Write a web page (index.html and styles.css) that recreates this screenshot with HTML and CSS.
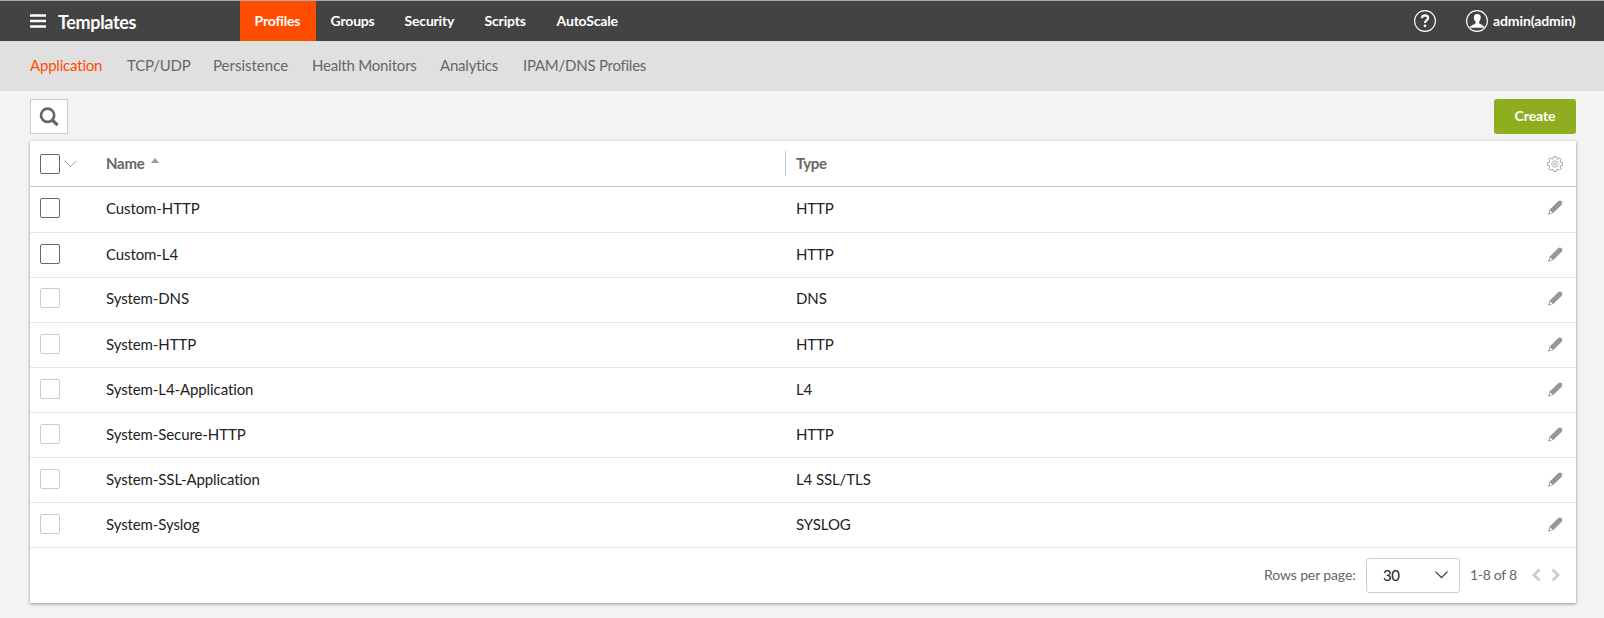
FILE: index.html
```html
<!DOCTYPE html>
<html lang="en">
<head>
<meta charset="utf-8">
<title>Templates - Profiles</title>
<link rel="stylesheet" href="styles.css">
</head>
<body>
<svg class="sprite" aria-hidden="true">
  <symbol id="pencil" viewBox="0 0 15 15"><path d="M1.700 9.600 9.900 1.500Q11.800-.3 13.500 1.200 15.100 3 13.500 4.900L5.300 13 .3 14.400Z" fill="#979797"/><path d="M2.300 10.400 4.600 12.700 1.500 13.500Z" fill="#fff"/><path d="M.3 14.400 2.400 13.800.9 12.400Z" fill="#979797"/></symbol>
</svg>
<header class="topbar">
  <div class="brand">
    <svg width="16" height="14" viewBox="0 0 16 14"><path d="M0 1.500H16M0 7H16M0 12.500H16" stroke="#fff" stroke-width="2.300"/></svg>
    <span class="brand-name">Templates</span>
  </div>
  <nav class="tabs">
    <a class="tab active"><span class="t1">Profiles</span></a>
    <a class="tab"><span class="t2">Groups</span></a>
    <a class="tab"><span class="t3">Security</span></a>
    <a class="tab"><span class="t4">Scripts</span></a>
    <a class="tab"><span class="t5">AutoScale</span></a>
  </nav>
  <div class="account">
    <svg class="help" width="22" height="22" viewBox="0 0 22 22"><circle cx="11" cy="11" r="10.400" fill="none" stroke="#fff" stroke-width="1.100"/><path d="M7.900 8.100Q8.100 5.500 11 5.400 14.100 5.400 14.100 8 14.100 9.400 12.500 10.400 11.100 11.300 11.100 13" fill="none" stroke="#fff" stroke-width="2.200"/><circle cx="11" cy="15.800" r="1.400" fill="#fff"/></svg>
    <svg width="22" height="22" viewBox="0 0 22 22"><circle cx="11" cy="11" r="10.400" fill="none" stroke="#fff" stroke-width="1.100"/><path d="M11.300 4C13.800 4 14.900 5.300 14.700 7.600 14.600 9.700 13.800 10.600 13.200 11.500V13.200C13.500 14.200 17.500 14.800 18.900 17.800H3.500C5 14.900 9.300 14.200 9.600 13.200V11.500C8.700 10.600 7.900 9.600 7.900 7.400 7.900 5.200 9.200 4 11.300 4Z" fill="#fff"/></svg>
    <span class="user">admin(admin)</span>
  </div>
</header>
<nav class="subnav">
  <a class="s1 current">Application</a><a class="s2">TCP/UDP</a><a class="s3">Persistence</a><a class="s4">Health Monitors</a><a class="s5">Analytics</a><a class="s6">IPAM/DNS Profiles</a>
</nav>
<main>
  <div class="toolbar">
    <button class="search"><svg width="20" height="20" viewBox="0 0 20 20"><circle cx="8.600" cy="8.300" r="6.600" fill="none" stroke="#666" stroke-width="2.700"/><path d="M13.200 13 18.600 18.200" stroke="#666" stroke-width="3.200"/></svg></button>
    <button class="create">Create</button>
  </div>
  <section class="card">
    <div class="row head">
      <div class="check"><i class="box"></i><svg width="13" height="8" viewBox="0 0 13 8"><path d="M.5.7 6.500 6.700 12.500.7" fill="none" stroke="#999"/></svg></div>
      <div class="name">Name<i class="sort"></i></div>
      <div class="type"><span>Type</span></div>
      <svg class="gear" width="16" height="16" viewBox="0 0 16 16" fill="none" stroke="#a3a3a3"><path d="M6.500.8h3l.4 1.900 1.100.4 1.600-1.200 1.600 1.600-1.100 1.700.5 1.100 1.900.4v2.800l-1.900.4-.5 1.100 1.100 1.700-1.600 1.600-1.600-1.200-1.100.5-.4 1.800h-3l-.4-1.800-1.100-.5-1.700 1.200-1.600-1.600 1.200-1.700-.5-1.100-1.900-.4V6.700l1.900-.4.5-1.100-1.200-1.700 1.600-1.600 1.700 1.200 1.100-.4Z"/><circle cx="8" cy="8" r="3.300" stroke="#bbb"/><circle cx="8" cy="8" r="1.400" stroke="#bbb"/></svg>
    </div>
    <div class="row first raised"><div class="check"><i class="box"></i></div><div class="name">Custom-HTTP</div><div class="type">HTTP</div><svg class="edit"><use href="#pencil"/></svg></div>
    <div class="row"><div class="check"><i class="box"></i></div><div class="name">Custom-L4</div><div class="type">HTTP</div><svg class="edit"><use href="#pencil"/></svg></div>
    <div class="row locked raised"><div class="check"><i class="box"></i></div><div class="name">System-DNS</div><div class="type">DNS</div><svg class="edit"><use href="#pencil"/></svg></div>
    <div class="row locked"><div class="check"><i class="box"></i></div><div class="name">System-HTTP</div><div class="type">HTTP</div><svg class="edit"><use href="#pencil"/></svg></div>
    <div class="row locked"><div class="check"><i class="box"></i></div><div class="name">System-L4-Application</div><div class="type">L4</div><svg class="edit"><use href="#pencil"/></svg></div>
    <div class="row locked"><div class="check"><i class="box"></i></div><div class="name">System-Secure-HTTP</div><div class="type">HTTP</div><svg class="edit"><use href="#pencil"/></svg></div>
    <div class="row locked"><div class="check"><i class="box"></i></div><div class="name">System-SSL-Application</div><div class="type">L4 SSL/TLS</div><svg class="edit"><use href="#pencil"/></svg></div>
    <div class="row locked"><div class="check"><i class="box"></i></div><div class="name">System-Syslog</div><div class="type">SYSLOG</div><svg class="edit"><use href="#pencil"/></svg></div>
    <footer class="pager">
      <span class="per-page">Rows per page:</span>
      <div class="select"><span>30</span><svg width="13" height="8" viewBox="0 0 13 8"><path d="M.5.7 6.500 6.700 12.500.7" fill="none" stroke="#333" stroke-width="1.200"/></svg></div>
      <span class="range">1-8 of 8</span>
      <svg class="arrows" width="28" height="14" viewBox="0 0 28 14"><path d="M7.500 1.500 2 7 7.500 12.500M20.500 1.500 26 7 20.500 12.500" fill="none" stroke="#ccc" stroke-width="2.800"/></svg>
    </footer>
  </section>
</main>
</body>
</html>
```
FILE: styles.css
```css
* { box-sizing: border-box; }
body { margin: 0; height: 618px; background: #f3f3f3; color: #222; font: 15px/20px Lato, "Liberation Sans", sans-serif; font-variant-ligatures: none; letter-spacing: -.1px; overflow: hidden; }
.sprite { display: none; }
svg { display: block; flex: none; }
button { border: 0; padding: 0; font: inherit; letter-spacing: inherit; }
.topbar { display: flex; height: 41px; border-top: 1px solid #a9abaa; background: #434343; color: #fff; font-size: 14px; font-weight: 700; letter-spacing: -.2px; }
.brand { width: 240px; padding-left: 30px; display: flex; align-items: center; gap: 12px; }
.brand-name { font-size: 18px; letter-spacing: -.35px; padding-top: 2px; }
.tabs { display: flex; }
.tab { padding: 0 15px; display: flex; align-items: center; white-space: nowrap; }
.tab.active { background: #ff4d00; }
.t1 { width: 46px; }
.t2 { width: 44px; }
.t3 { width: 50px; }
.t4 { width: 42px; }
.t5 { width: 62px; }
.t1, .t2, .t3, .t4, .t5 { margin-left: -.4px; margin-right: .4px; }
.account { margin-left: auto; padding-right: 28px; display: flex; align-items: center; }
.help { margin-right: 30px; }
.user { margin-left: 5px; width: 83px; white-space: nowrap; letter-spacing: -.1px; }
.subnav { display: flex; align-items: center; gap: 23px; height: 50px; padding: 0 30px 2px; background: #e0e0e0; color: #666; white-space: nowrap; letter-spacing: -.2px; }
.current { color: #ff4d00; }
.s1 { width: 74px; }
.s2 { width: 63px; }
.s3 { width: 76px; letter-spacing: 0; }
.s4 { width: 105px; }
.s5 { width: 60px; }
.s6 { width: 125px; letter-spacing: -.25px; }
main { padding: 8px 28px 0 30px; }
.toolbar { display: flex; justify-content: space-between; height: 42px; align-items: flex-start; }
.search { width: 38px; height: 35px; border: 1px solid #ccc; background: #fff; display: flex; align-items: center; justify-content: center; }
.create { width: 82px; height: 35px; padding-bottom: 2px; border-radius: 3px; background: #8fae1f; color: #fff; font-size: 14px; font-weight: 700; }
.card { background: #fff; box-shadow: 0 1px 3px rgba(0,0,0,.4); }
.row { display: flex; height: 45px; align-items: center; padding-bottom: 2px; border-bottom: 1px solid #e6e6e6; }
.row.raised { padding-bottom: 4px; }
.row.first { height: 46px; }
.row.head { height: 46px; padding: 0; border-color: #c8c8c8; color: #666; font-weight: 700; }
.check { width: 76px; padding-left: 10px; display: flex; align-items: center; gap: 4px; }
.box { width: 20px; height: 20px; border: 1px solid #666; border-radius: 2px; background: #fff; }
.locked .box { border-color: #ccc; }
.name { width: 679px; display: flex; }
.head .name { padding-bottom: 2px; letter-spacing: -.25px; }
.sort { margin: 5px 0 0 6px; width: 0; height: 0; border: 4.5px solid transparent; border-top: 0; border-bottom: 5px solid #999; }
.type { flex: 1; padding-left: 11px; }
.head .type { border-left: 1px solid #ccc; padding: 2px 0 3px 10px; letter-spacing: -.4px; }
.gear { margin-right: 13px; }
.edit { width: 15px; height: 15px; margin-right: 13px; }
.pager { height: 55px; display: flex; align-items: center; justify-content: flex-end; padding: 0 16px 1px 0; font-size: 14px; color: #666; white-space: nowrap; letter-spacing: -.12px; }
.per-page { width: 92px; }
.select { width: 94px; height: 35px; margin: 0 10px 0 10px; padding: 0 11px 0 16px; border: 1px solid #ccc; border-radius: 3px; display: flex; align-items: center; justify-content: space-between; color: #222; font-size: 15px; letter-spacing: -.4px; }
.range { width: 47px; margin-right: 15px; letter-spacing: -.3px; }
```
